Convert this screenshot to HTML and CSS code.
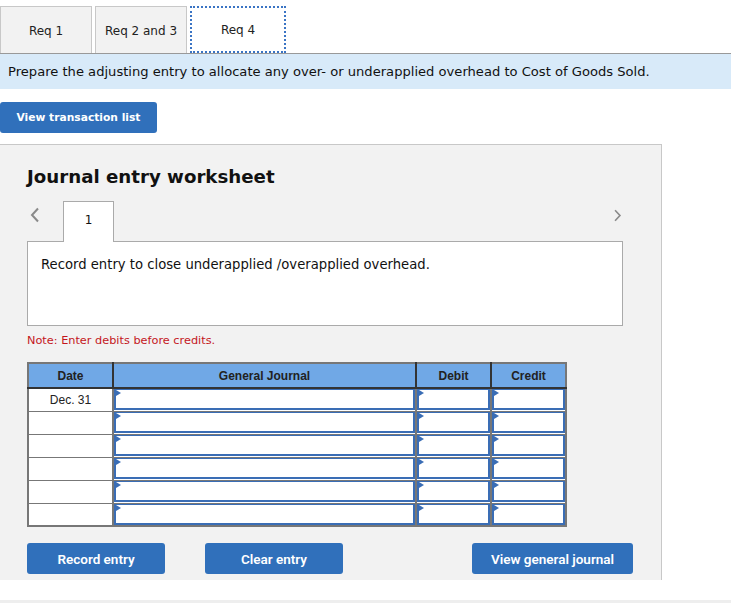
FILE: index.html
```html
<!DOCTYPE html>
<html>
<head>
<meta charset="utf-8">
<link rel="stylesheet" href="styles.css">
</head>
<body>
<div class="tabs">
  <div class="tab">Req 1</div>
  <div class="tab">Req 2 and 3</div>
  <div class="tab active">Req 4</div>
</div>
<div class="banner">Prepare the adjusting entry to allocate any over- or underapplied overhead to Cost of Goods Sold.</div>
<div class="btn-row"><button class="btn btn-list">View transaction list</button></div>
<div class="panel">
  <h2 class="title">Journal entry worksheet</h2>
  <div class="nav">
    <span class="chev left"><svg width="10" height="16" viewBox="0 0 10 16"><path d="M8 1.5 L2 8 L8 14.5" fill="none" stroke="#8a8a8a" stroke-width="2"/></svg></span>
    <div class="num-tab">1</div>
    <span class="chev right"><svg width="10" height="16" viewBox="0 0 10 16"><path d="M2 1.5 L8 8 L2 14.5" fill="none" stroke="#8a8a8a" stroke-width="2"/></svg></span>
  </div>
  <div class="desc">Record entry to close underapplied /overapplied overhead.</div>
  <div class="note">Note: Enter debits before credits.</div>
  <table class="journal">
    <thead>
      <tr><th class="c-date">Date</th><th class="c-gj">General Journal</th><th class="c-amt">Debit</th><th class="c-amt">Credit</th></tr>
    </thead>
    <tbody>
      <tr><td class="date">Dec. 31</td><td><div class="inp"></div></td><td><div class="inp"></div></td><td><div class="inp"></div></td></tr>
      <tr><td class="date"></td><td><div class="inp"></div></td><td><div class="inp"></div></td><td><div class="inp"></div></td></tr>
      <tr><td class="date"></td><td><div class="inp"></div></td><td><div class="inp"></div></td><td><div class="inp"></div></td></tr>
      <tr><td class="date"></td><td><div class="inp"></div></td><td><div class="inp"></div></td><td><div class="inp"></div></td></tr>
      <tr><td class="date"></td><td><div class="inp"></div></td><td><div class="inp"></div></td><td><div class="inp"></div></td></tr>
      <tr><td class="date"></td><td><div class="inp"></div></td><td><div class="inp"></div></td><td><div class="inp"></div></td></tr>
    </tbody>
  </table>
  <div class="actions">
    <button class="btn act">Record entry</button>
    <button class="btn act">Clear entry</button>
    <button class="btn act wide">View general journal</button>
  </div>
</div>
<div class="footer-line"></div>
</body>
</html>
```

FILE: styles.css
```css
* { box-sizing: border-box; }
body {
  margin: 0;
  font-family: "DejaVu Sans", Verdana, sans-serif;
  color: #111;
  background: #fff;
}
.tabs {
  display: flex;
  gap: 3px;
  padding-top: 6px;
  border-bottom: 1px solid #999;
}
.tab {
  width: 92px;
  height: 47px;
  background: #f2f2f2;
  border: 1px solid #c8c8c8;
  border-bottom: none;
  display: flex;
  align-items: center;
  justify-content: center;
  font-size: 12px;
  color: #222;
  padding-top: 1px;
}
.tab.active {
  width: 96px;
  background: #fff;
  border: 2px dotted #3a74c4;
  margin-bottom: -1px;
}
.banner {
  background: #d8eaf9;
  height: 35px;
  display: flex;
  align-items: center;
  padding-left: 8px;
  font-size: 13.1px;
  color: #111;
}
.btn-row { padding-top: 13px; }
.btn {
  background: #3070bb;
  color: #fff;
  border: none;
  border-radius: 3px;
  font-weight: bold;
  cursor: pointer;
}
.btn-list {
  width: 157px;
  height: 31px;
  font-family: "DejaVu Sans", Verdana, sans-serif;
  font-size: 10.7px;
  padding: 0;
}
.panel {
  margin-top: 11px;
  width: 662px;
  height: 436px;
  background: #f2f2f2;
  border-top: 1px solid #c8c8c8;
  border-right: 1px solid #c8c8c8;
  padding: 0 0 0 27px;
}
.title {
  margin: 0;
  padding-top: 20px;
  font-size: 18.2px;
  line-height: 23px;
  font-weight: bold;
  color: #111;
}
.nav {
  margin-top: 13px;
  width: 595px;
  height: 40px;
  display: flex;
  align-items: flex-start;
  position: relative;
}
.chev { display: flex; }
.chev.left { margin: 6px 0 0 3px; }
.chev.right { margin: 8px 0 0 auto; }
.chev.right svg { width: 9px; height: 13px; }
.num-tab {
  margin-left: 23px;
  width: 51px;
  height: 41px;
  background: #fff;
  border: 1px solid #aaa;
  border-bottom: none;
  font-size: 12px;
  text-align: center;
  padding-top: 11px;
  position: relative;
  z-index: 1;
}
.desc {
  width: 596px;
  height: 85px;
  background: #fff;
  border: 1px solid #aaa;
  padding: 15px 0 0 13px;
  font-family: "DejaVu Sans", sans-serif;
  font-size: 13.2px;
  color: #111;
}
.note {
  margin-top: 8px;
  font-family: "DejaVu Sans", sans-serif;
  font-size: 11.3px;
  color: #c4161c;
  height: 14px;
  line-height: 14px;
}
.journal {
  margin-top: 14px;
  border-collapse: collapse;
  font-family: "Liberation Sans", Arial, sans-serif;
  font-size: 12px;
  border: 2px solid #777;
}
.journal th {
  background: #70a8e6;
  height: 25px;
  font-weight: bold;
  color: #222;
  border-left: 2px solid #333;
  border-bottom: 2px solid #333;
  padding: 0;
}
.journal th:first-child { border-left: none; }
.c-date { width: 85px; }
.c-gj { width: 303px; }
.c-amt { width: 75px; }
.journal td {
  height: 23px;
  padding: 0;
  border: 1px solid #777;
  border-left-width: 2px;
  background: #fff;
}
.journal td.date {
  text-align: center;
  color: #222;
  border-left: none;
}
.inp {
  height: 21px;
  border: 2px solid #3a6db5;
  border-top-width: 1px;
  position: relative;
  background: #fff;
}
.inp::before {
  content: "";
  position: absolute;
  left: 0;
  top: 0;
  border-left: 5px solid #3a6db5;
  border-top: 3px solid transparent;
  border-bottom: 3px solid transparent;
}
.actions {
  margin-top: 16px;
  width: 606px;
  display: flex;
  gap: 40px;
}
.act {
  width: 138px;
  height: 31px;
  font-family: Roboto, "Liberation Sans", sans-serif;
  font-size: 13.5px;
  font-weight: 600;
}
.act.wide { width: 161px; margin-left: auto; }
.footer-line {
  margin-top: 20px;
  height: 3px;
  background: #eee;
}
```
